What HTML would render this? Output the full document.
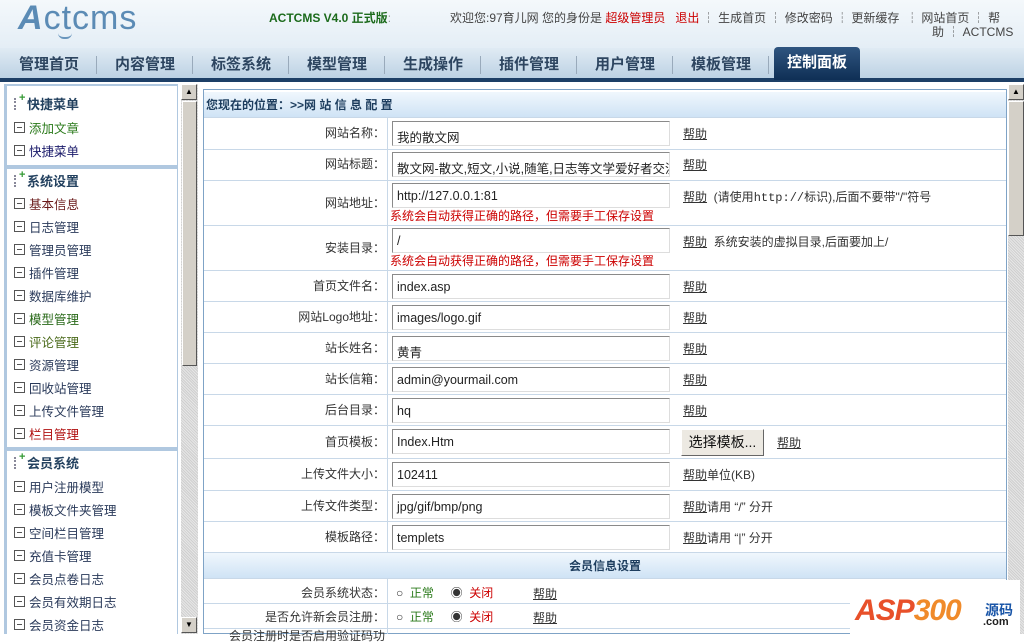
<!DOCTYPE html>
<html><head><meta charset="utf-8"><style>
*{margin:0;padding:0;box-sizing:border-box}
body{width:1024px;height:634px;overflow:hidden;position:relative;background:#fff;font-family:"Liberation Sans","Noto Sans CJK SC",sans-serif;font-size:12px;color:#333}
.a{position:absolute}
#hdr{left:0;top:0;width:1024px;height:48px;background:linear-gradient(#f4f8fb,#e4eef6)}
#nav{left:0;top:48px;width:1024px;height:33px;background:linear-gradient(#e0ebf4,#b9cfe2)}
#navline{left:0;top:78px;width:1024px;height:4px;background:#1d3f66}
.tab{position:absolute;top:53px;font-size:15px;color:#2d4560;font-weight:bold}
.sep{position:absolute;top:56px;width:1px;height:18px;background:#9ab}
#act{left:774px;top:47px;width:86px;height:33px;background:linear-gradient(#2f5580,#0f2f55);border-radius:4px 4px 0 0;color:#fff;font-size:15px;font-weight:bold;text-align:center;line-height:32px}
#side{left:4px;top:84px;width:174px;height:550px;background:#b0c8e0}
.box{position:absolute;left:7px;width:170px;background:#fff}
.sh{position:absolute;left:14px;font-size:13px;font-weight:bold;color:#23415f}
.si{position:absolute;left:14px;font-size:12.5px;color:#2a3a5a}
.si:before{content:"";display:inline-block;width:9px;height:9px;border:1px solid #555;margin-right:4px;vertical-align:0px;background:linear-gradient(#555,#555) center/5px 1px no-repeat}
.ic{display:inline-block;width:12px;height:12px;margin-right:1px;vertical-align:-1px;border-left:2px dotted #889;position:relative}
.ic:after{content:"+";position:absolute;left:3px;top:-6px;color:#393;font-weight:bold;font-size:11px}
.sb{background:repeating-linear-gradient(45deg,#e6e6e6 0 1px,#cfcfcf 1px 2px)}
.btn{position:absolute;width:16px;height:16px;background:#d4d0c8;border:1px solid;border-color:#fff #555 #555 #fff;font-size:8px;text-align:center;line-height:14px;color:#000}
#main{left:203px;top:89px;width:804px;height:545px;border:1px solid #7fa3c6;background:#fff;overflow:hidden}
.row{position:absolute;left:204px;width:802px;border-bottom:1px solid #c8d8e8}
.lb{position:absolute;right:639px;font-size:12px;color:#333;white-space:nowrap}
.inp{position:absolute;left:392px;width:278px;height:25px;border:1px solid;border-color:#8a8a8a #ddd #ddd #8a8a8a;background:#fff;font-size:12.5px;padding:5px 4px 0;color:#222;white-space:nowrap;overflow:hidden}
.hp{position:absolute;left:683px;font-size:12px;color:#333}
.vl{position:absolute;left:387px;width:1px;background:#c8d8e8}
.red{position:absolute;left:390px;color:#c00;font-size:12px}
.sec{background:linear-gradient(#f0f7fd,#cfe3f5)}
</style></head><body>
<div class="a" id="hdr"></div>
<div class="a" style="left:18px;top:-1px;font-size:34px;color:#5b8bb5;letter-spacing:1px"><b style="font-style:italic">A</b>ctcms</div>
<div class="a" style="left:58px;top:33px;width:14px;height:6px;border-bottom:2px solid #6a96bd;border-radius:0 0 8px 8px"></div>
<div class="a" style="left:269px;top:9px;font-size:12px;font-weight:bold;color:#1c6b1c">ACTCMS V4.0 正式版<span style="color:#999;font-weight:normal">:</span></div>
<div class="a" style="left:450px;top:9px;font-size:12px;color:#444;white-space:nowrap">欢迎您:97育儿网 您的身份是 <span style="color:#c00">超级管理员</span> &nbsp; <span style="color:#c00">退出</span> ┆ 生成首页 ┆ 修改密码 ┆ 更新缓存 &nbsp;┆ 网站首页 ┆ 帮</div>
<div class="a" style="left:932px;top:23px;font-size:12px;color:#444">助 ┆ ACTCMS</div>
<div class="a" id="nav"></div>
<div class="a" id="navline"></div>
<div class="tab" style="left:19px">管理首页</div><div class="sep" style="left:96px"></div>
<div class="tab" style="left:115px">内容管理</div><div class="sep" style="left:192px"></div>
<div class="tab" style="left:211px">标签系统</div><div class="sep" style="left:288px"></div>
<div class="tab" style="left:307px">模型管理</div><div class="sep" style="left:384px"></div>
<div class="tab" style="left:403px">生成操作</div><div class="sep" style="left:480px"></div>
<div class="tab" style="left:499px">插件管理</div><div class="sep" style="left:576px"></div>
<div class="tab" style="left:595px">用户管理</div><div class="sep" style="left:672px"></div>
<div class="tab" style="left:691px">模板管理</div><div class="sep" style="left:768px"></div>
<div class="a" id="act">控制面板</div>

<div class="a" id="side"></div>
<div class="box" style="top:86px;height:79px"></div>
<div class="box" style="top:169px;height:278px"></div>
<div class="box" style="top:451px;height:183px"></div>
<div class="sh" style="top:94px"><span class="ic"></span>快捷菜单</div>
<div class="si" style="top:118px;color:#2a7a1a">添加文章</div>
<div class="si" style="top:141px;color:#1a1a6a">快捷菜单</div>
<div class="sh" style="top:171px"><span class="ic"></span>系统设置</div>
<div class="si" style="top:194px;color:#6a1a1a">基本信息</div>
<div class="si" style="top:217px">日志管理</div>
<div class="si" style="top:240px">管理员管理</div>
<div class="si" style="top:263px">插件管理</div>
<div class="si" style="top:286px">数据库维护</div>
<div class="si" style="top:309px;color:#2a6a1a">模型管理</div>
<div class="si" style="top:332px;color:#4a6a1a">评论管理</div>
<div class="si" style="top:355px">资源管理</div>
<div class="si" style="top:378px">回收站管理</div>
<div class="si" style="top:401px">上传文件管理</div>
<div class="si" style="top:424px;color:#b01010">栏目管理</div>
<div class="sh" style="top:453px"><span class="ic"></span>会员系统</div>
<div class="si" style="top:477px">用户注册模型</div>
<div class="si" style="top:500px">模板文件夹管理</div>
<div class="si" style="top:523px">空间栏目管理</div>
<div class="si" style="top:546px">充值卡管理</div>
<div class="si" style="top:569px">会员点卷日志</div>
<div class="si" style="top:592px">会员有效期日志</div>
<div class="si" style="top:615px">会员资金日志</div>

<div class="a sb" style="left:181px;top:84px;width:17px;height:550px"></div>
<div class="btn" style="left:181px;top:84px">▲</div>
<div class="a" style="left:182px;top:101px;width:15px;height:265px;background:#d4d0c8;border:1px solid;border-color:#fff #555 #555 #fff"></div>
<div class="btn" style="left:181px;top:617px">▼</div>
<div class="a sb" style="left:1008px;top:84px;width:16px;height:550px"></div>
<div class="btn" style="left:1008px;top:84px">▲</div>
<div class="a" style="left:1008px;top:101px;width:16px;height:135px;background:#d4d0c8;border:1px solid;border-color:#fff #555 #555 #fff"></div>

<div class="a" id="main"></div>
<div class="row sec" style="top:92px;height:26px"></div>
<div class="a" style="left:206px;top:96px;font-size:12px;font-weight:bold;color:#1d3d5e">您现在的位置：>>网 站 信 息 配 置</div>
<div class="vl" style="top:118px;height:435px"></div>
<div class="vl" style="top:579px;height:55px"></div>

<div class="row" style="top:118px;height:32px"></div><div class="lb" style="top:124px">网站名称：</div><div class="inp" style="top:121px">我的散文网</div><div class="hp" style="top:125px"><u>帮助</u></div>
<div class="row" style="top:150px;height:31px"></div><div class="lb" style="top:155px">网站标题：</div><div class="inp" style="top:152px">散文网-散文,短文,小说,随笔,日志等文学爱好者交流</div><div class="hp" style="top:156px"><u>帮助</u></div>
<div class="row" style="top:181px;height:45px"></div><div class="lb" style="top:194px">网站地址：</div><div class="inp" style="top:183px">http://127.0.0.1:81</div><div class="red" style="top:207px">系统会自动获得正确的路径，但需要手工保存设置</div><div class="hp" style="top:188px"><u>帮助</u> &nbsp;(请使用<span style="font-family:'Liberation Mono'">http://</span>标识),后面不要带"/"符号</div>
<div class="row" style="top:226px;height:45px"></div><div class="lb" style="top:239px">安装目录：</div><div class="inp" style="top:228px">/</div><div class="red" style="top:252px">系统会自动获得正确的路径，但需要手工保存设置</div><div class="hp" style="top:233px"><u>帮助</u> &nbsp;系统安装的虚拟目录,后面要加上/</div>
<div class="row" style="top:271px;height:31px"></div><div class="lb" style="top:277px">首页文件名：</div><div class="inp" style="top:274px">index.asp</div><div class="hp" style="top:278px"><u>帮助</u></div>
<div class="row" style="top:302px;height:31px"></div><div class="lb" style="top:308px">网站Logo地址：</div><div class="inp" style="top:305px">images/logo.gif</div><div class="hp" style="top:309px"><u>帮助</u></div>
<div class="row" style="top:333px;height:31px"></div><div class="lb" style="top:339px">站长姓名：</div><div class="inp" style="top:336px">黄青</div><div class="hp" style="top:340px"><u>帮助</u></div>
<div class="row" style="top:364px;height:31px"></div><div class="lb" style="top:370px">站长信箱：</div><div class="inp" style="top:367px">admin@yourmail.com</div><div class="hp" style="top:371px"><u>帮助</u></div>
<div class="row" style="top:395px;height:31px"></div><div class="lb" style="top:401px">后台目录：</div><div class="inp" style="top:398px">hq</div><div class="hp" style="top:402px"><u>帮助</u></div>
<div class="row" style="top:426px;height:33px"></div><div class="lb" style="top:433px">首页模板：</div><div class="inp" style="top:429px">Index.Htm</div>
<div class="a" style="left:681px;top:429px;width:83px;height:27px;background:#ece9e2;border:1px solid;border-color:#fff #666 #666 #fff;font-size:14px;text-align:center;line-height:25px;color:#111">选择模板...</div><div class="hp" style="left:777px;top:434px"><u>帮助</u></div>
<div class="row" style="top:459px;height:32px"></div><div class="lb" style="top:465px">上传文件大小：</div><div class="inp" style="top:462px">102411</div><div class="hp" style="top:466px"><u>帮助</u>单位(KB)</div>
<div class="row" style="top:491px;height:31px"></div><div class="lb" style="top:497px">上传文件类型：</div><div class="inp" style="top:494px">jpg/gif/bmp/png</div><div class="hp" style="top:498px"><u>帮助</u>请用 “/” 分开</div>
<div class="row" style="top:522px;height:31px"></div><div class="lb" style="top:528px">模板路径：</div><div class="inp" style="top:525px">templets</div><div class="hp" style="top:529px"><u>帮助</u>请用 “|” 分开</div>
<div class="row sec" style="top:553px;height:26px"></div><div class="a" style="left:204px;width:802px;top:557px;text-align:center;font-weight:bold;color:#1d3d5e;font-size:12px">会员信息设置</div>
<div class="row" style="top:579px;height:25px"></div><div class="lb" style="top:584px">会员系统状态：</div>
<div class="a" style="left:396px;top:584px;color:#333;font-size:12px">○ <span style="color:#2a7a1a">&nbsp;正常</span> &nbsp; &nbsp; ◉ <span style="color:#c00">&nbsp;关闭</span></div><div class="hp" style="left:533px;top:585px"><u>帮助</u></div>
<div class="row" style="top:604px;height:25px"></div><div class="lb" style="top:608px">是否允许新会员注册：</div>
<div class="a" style="left:396px;top:608px;color:#333;font-size:12px">○ <span style="color:#2a7a1a">&nbsp;正常</span> &nbsp; &nbsp; ◉ <span style="color:#c00">&nbsp;关闭</span></div><div class="hp" style="left:533px;top:609px"><u>帮助</u></div>
<div class="lb" style="top:627px">会员注册时是否启用验证码功</div>

<div class="a" style="left:850px;top:580px;width:170px;height:54px;background:#fff"></div>
<div class="a" style="left:855px;top:594px;font-size:30px;font-weight:bold;font-style:italic;color:#e8502a;letter-spacing:-1px">ASP<span style="color:#f08a2a">300</span></div>
<div class="a" style="left:985px;top:600px;font-size:14px;font-weight:bold;color:#1a56a8">源码</div>
<div class="a" style="left:983px;top:616px;font-size:11px;font-weight:bold;color:#222">.com</div>
</body></html>
